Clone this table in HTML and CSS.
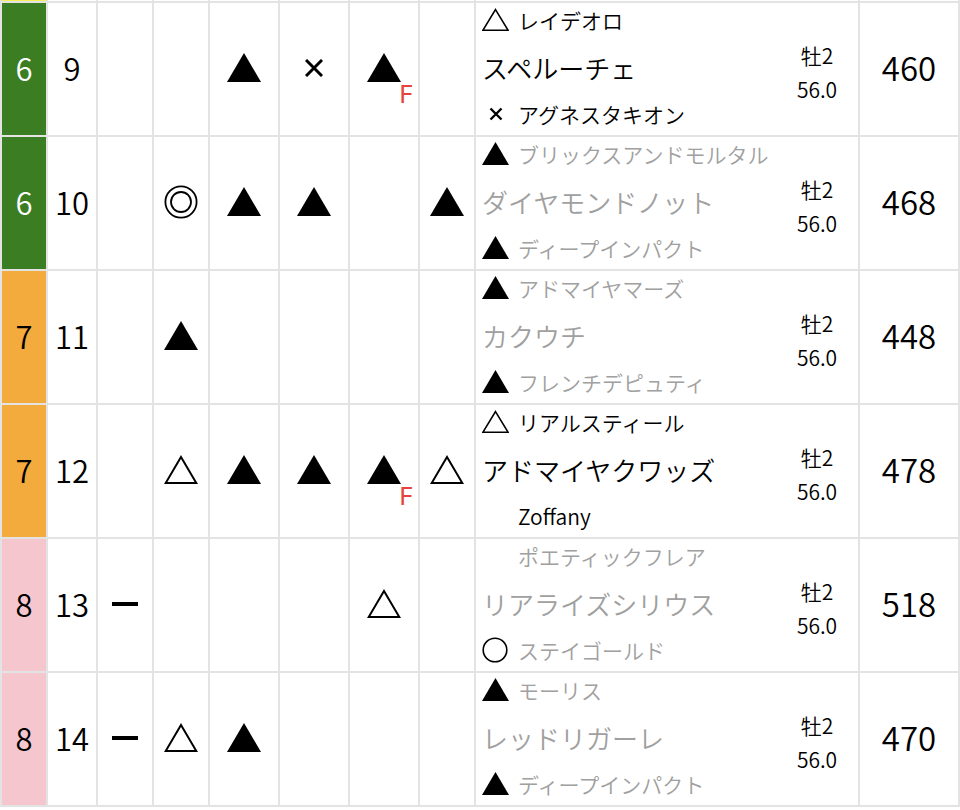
FILE: index.html
```html
<!DOCTYPE html>
<html lang="ja">
<head>
<meta charset="utf-8">
<title>出馬表</title>
<link rel="stylesheet" href="styles.css">
</head>
<body>
<div class="table">
  <div class="c stub w5"></div><div class="c stub"></div><div class="c stub"></div><div class="c stub"></div><div class="c stub"></div><div class="c stub"></div><div class="c stub"></div><div class="c stub"></div><div class="c stub"></div><div class="c stub"></div>

  <!-- 9 -->
  <div class="c waku w6">6</div>
  <div class="c num">9</div>
  <div class="c mark"></div>
  <div class="c mark"></div>
  <div class="c mark"><svg class="big"><use href="#tri"/></svg></div>
  <div class="c mark"><svg class="x"><use href="#cross"/></svg></div>
  <div class="c mark"><span class="mw"><svg class="big"><use href="#tri"/></svg><span class="f">F</span></span></div>
  <div class="c mark"></div>
  <div class="c name">
    <div class="lines">
      <div class="sub"><span class="mk"><svg class="sm"><use href="#tri-o-s"/></svg></span>レイデオロ</div>
      <div class="main">スペルーチェ</div>
      <div class="sub"><span class="mk"><svg class="xs"><use href="#cross-s"/></svg></span>アグネスタキオン</div>
    </div>
    <div class="spec"><div>牡2</div><div>56.0</div></div>
  </div>
  <div class="c wt">460</div>

  <!-- 10 -->
  <div class="c waku w6">6</div>
  <div class="c num">10</div>
  <div class="c mark"></div>
  <div class="c mark"><svg class="dbl"><use href="#dcircle"/></svg></div>
  <div class="c mark"><svg class="big"><use href="#tri"/></svg></div>
  <div class="c mark"><svg class="big"><use href="#tri"/></svg></div>
  <div class="c mark"></div>
  <div class="c mark"><svg class="big"><use href="#tri"/></svg></div>
  <div class="c name gray">
    <div class="lines">
      <div class="sub"><span class="mk"><svg class="sm"><use href="#tri-s"/></svg></span>ブリックスアンドモルタル</div>
      <div class="main">ダイヤモンドノット</div>
      <div class="sub"><span class="mk"><svg class="sm"><use href="#tri-s"/></svg></span>ディープインパクト</div>
    </div>
    <div class="spec"><div>牡2</div><div>56.0</div></div>
  </div>
  <div class="c wt">468</div>

  <!-- 11 -->
  <div class="c waku w7">7</div>
  <div class="c num">11</div>
  <div class="c mark"></div>
  <div class="c mark"><svg class="big"><use href="#tri"/></svg></div>
  <div class="c mark"></div>
  <div class="c mark"></div>
  <div class="c mark"></div>
  <div class="c mark"></div>
  <div class="c name gray">
    <div class="lines">
      <div class="sub"><span class="mk"><svg class="sm"><use href="#tri-s"/></svg></span>アドマイヤマーズ</div>
      <div class="main">カクウチ</div>
      <div class="sub"><span class="mk"><svg class="sm"><use href="#tri-s"/></svg></span>フレンチデピュティ</div>
    </div>
    <div class="spec"><div>牡2</div><div>56.0</div></div>
  </div>
  <div class="c wt">448</div>

  <!-- 12 -->
  <div class="c waku w7">7</div>
  <div class="c num">12</div>
  <div class="c mark"></div>
  <div class="c mark"><svg class="big"><use href="#tri-o"/></svg></div>
  <div class="c mark"><svg class="big"><use href="#tri"/></svg></div>
  <div class="c mark"><svg class="big"><use href="#tri"/></svg></div>
  <div class="c mark"><span class="mw"><svg class="big"><use href="#tri"/></svg><span class="f">F</span></span></div>
  <div class="c mark"><svg class="big"><use href="#tri-o"/></svg></div>
  <div class="c name">
    <div class="lines">
      <div class="sub"><span class="mk"><svg class="sm"><use href="#tri-o-s"/></svg></span>リアルスティール</div>
      <div class="main">アドマイヤクワッズ</div>
      <div class="sub"><span class="mk"></span>Zoffany</div>
    </div>
    <div class="spec"><div>牡2</div><div>56.0</div></div>
  </div>
  <div class="c wt">478</div>

  <!-- 13 -->
  <div class="c waku w8">8</div>
  <div class="c num">13</div>
  <div class="c mark"><svg class="dash"><use href="#dash"/></svg></div>
  <div class="c mark"></div>
  <div class="c mark"></div>
  <div class="c mark"></div>
  <div class="c mark"><svg class="big"><use href="#tri-o"/></svg></div>
  <div class="c mark"></div>
  <div class="c name gray">
    <div class="lines">
      <div class="sub"><span class="mk"></span>ポエティックフレア</div>
      <div class="main">リアライズシリウス</div>
      <div class="sub"><span class="mk"><svg class="circ"><use href="#circle-s"/></svg></span>ステイゴールド</div>
    </div>
    <div class="spec"><div>牡2</div><div>56.0</div></div>
  </div>
  <div class="c wt">518</div>

  <!-- 14 -->
  <div class="c waku w8">8</div>
  <div class="c num">14</div>
  <div class="c mark"><svg class="dash"><use href="#dash"/></svg></div>
  <div class="c mark"><svg class="big"><use href="#tri-o"/></svg></div>
  <div class="c mark"><svg class="big"><use href="#tri"/></svg></div>
  <div class="c mark"></div>
  <div class="c mark"></div>
  <div class="c mark"></div>
  <div class="c name gray">
    <div class="lines">
      <div class="sub"><span class="mk"><svg class="sm"><use href="#tri-s"/></svg></span>モーリス</div>
      <div class="main">レッドリガーレ</div>
      <div class="sub"><span class="mk"><svg class="sm"><use href="#tri-s"/></svg></span>ディープインパクト</div>
    </div>
    <div class="spec"><div>牡2</div><div>56.0</div></div>
  </div>
  <div class="c wt">470</div>
</div>

<svg class="defs" xmlns="http://www.w3.org/2000/svg">
  <symbol id="tri" viewBox="0 0 34 29"><path d="M17 0 L34 29 L0 29 Z" fill="#000"/></symbol>
  <symbol id="tri-o" viewBox="0 0 34 29"><path d="M17 2 L32.3 28 L1.7 28 Z" fill="none" stroke="#000" stroke-width="2" stroke-linejoin="miter"/></symbol>
  <symbol id="tri-s" viewBox="0 0 27 23"><path d="M13.5 0 L27 23 L0 23 Z" fill="#000"/></symbol>
  <symbol id="tri-o-s" viewBox="0 0 27 23"><path d="M13.5 1.6 L26 22.2 L1 22.2 Z" fill="none" stroke="#000" stroke-width="1.6"/></symbol>
  <symbol id="dcircle" viewBox="0 0 34 34"><circle cx="17" cy="17" r="15.6" fill="none" stroke="#000" stroke-width="1.8"/><circle cx="17" cy="17" r="10" fill="none" stroke="#000" stroke-width="1.8"/></symbol>
  <symbol id="cross" viewBox="0 0 18 18"><path d="M1 1 L17 17 M17 1 L1 17" stroke="#000" stroke-width="3"/></symbol>
  <symbol id="cross-s" viewBox="0 0 14 14"><path d="M1.5 1.5 L12.5 12.5 M12.5 1.5 L1.5 12.5" stroke="#000" stroke-width="2.4"/></symbol>
  <symbol id="circle-s" viewBox="0 0 26 26"><circle cx="13" cy="13" r="11.8" fill="none" stroke="#000" stroke-width="1.6"/></symbol>
  <symbol id="dash" viewBox="0 0 26 4"><rect x="0" y="0" width="26" height="4" fill="#000"/></symbol>
</svg>
</body>
</html>
```

FILE: styles.css
```css
html, body {
  margin: 0;
  padding: 0;
  background: #fff;
}

body {
  font-family: "Noto Sans CJK JP", "Noto Sans", sans-serif;
  font-weight: 350;
  color: #000;
  width: 960px;
}

.table {
  display: grid;
  grid-template-columns: 44px 48px 54px 54px 68px 68px 68px 54px 382px 98px;
  grid-template-rows: 1px repeat(6, 132px);
  gap: 2px;
  padding: 0 2px 2px 2px;
  background: #e3e3e3;
  width: 960px;
  box-sizing: border-box;
}

.c {
  background: #fff;
  display: flex;
  align-items: center;
  justify-content: center;
  min-width: 0;
}

.stub { height: 1px; }

.w5 { background: #f6f05a; }
.w6 { background: #3a7d22; color: #fff; }
.w7 { background: #f4ab3e; }
.w8 { background: #f5c6ce; }

.waku, .num {
  font-size: 31px;
  line-height: 1;
  padding-bottom: 4px;
}

.mark { position: relative; }

.mark svg { display: block; fill: #000; }

.big { width: 34px; height: 29px; margin-bottom: 3px; }
.dbl { width: 34px; height: 34px; margin-bottom: 2px; }
.x { width: 18px; height: 18px; margin-bottom: 2px; }
.dash { width: 26px; height: 4px; margin-bottom: 3px; }

.mw {
  position: relative;
  display: block;
}

.f {
  position: absolute;
  left: 32px;
  top: 27px;
  color: #e8403a;
  font-family: "Noto Sans", sans-serif;
  font-weight: 400;
  font-size: 26px;
  line-height: 1;
}

.name {
  justify-content: flex-start;
  align-items: stretch;
  padding-left: 6px;
}

.lines {
  flex: 1;
  display: grid;
  grid-template-rows: 33px 62px 31px;
  min-width: 0;
}

.sub, .main {
  display: flex;
  align-items: center;
  white-space: nowrap;
}

.sub { font-size: 21px; }
.main { font-size: 26px; }

.gray .sub, .gray .main { color: #a0a0a0; }

.mk {
  flex: none;
  width: 36px;
  display: flex;
  align-items: center;
}

.mk svg { display: block; }
.sm { width: 27px; height: 23px; }
.xs { width: 14px; height: 14px; margin-left: 7px; }
.circ { width: 26px; height: 26px; }

.spec {
  flex: none;
  width: 64px;
  margin-right: 9px;
  padding-top: 6px;
  display: flex;
  flex-direction: column;
  justify-content: center;
  align-items: center;
  font-size: 21px;
  line-height: 34px;
}

.wt {
  font-size: 33px;
  line-height: 1;
  padding-bottom: 4px;
}

.defs {
  display: block;
  width: 0;
  height: 0;
  overflow: hidden;
}
```
